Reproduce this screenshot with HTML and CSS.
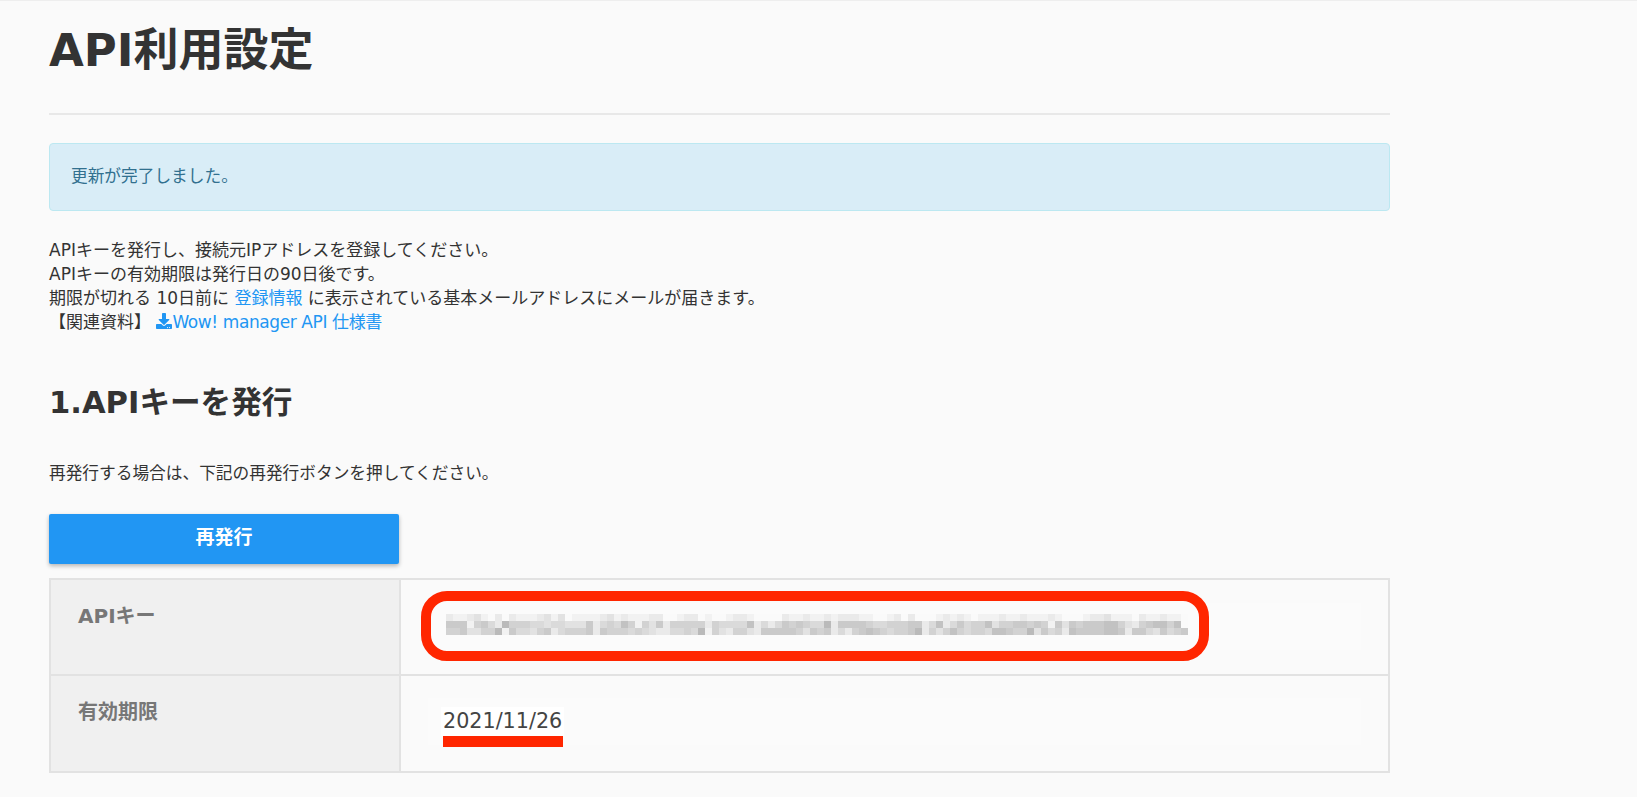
FILE: index.html
```html
<!DOCTYPE html>
<html lang="ja">
<head>
<meta charset="utf-8">
<title>API利用設定</title>
<link rel="stylesheet" href="styles.css">
</head>
<body>
<main class="page">
  <h1 class="title">API利用設定</h1>
  <div class="alert">更新が完了しました。</div>
  <p class="intro">APIキーを発行し、接続元IPアドレスを登録してください。<br>
  APIキーの有効期限は発行日の90日後です。<br>
  期限が切れる 10日前に <a class="link" href="#">登録情報</a> に表示されている基本メールアドレスにメールが届きます。<br>
  【関連資料】 <a class="link link-doc" href="#"><svg class="dl-icon" viewBox="0 0 512 512" aria-hidden="true"><path d="M216 0h80c13.3 0 24 10.7 24 24v168h87.7c17.8 0 26.7 21.5 14.1 34.1L269.7 378.3c-7.5 7.5-19.8 7.5-27.3 0L90.1 226.1c-12.6-12.6-3.7-34.1 14.1-34.1H192V24c0-13.3 10.7-24 24-24zm296 376v112c0 13.3-10.7 24-24 24H24c-13.3 0-24-10.7-24-24V376c0-13.3 10.7-24 24-24h146.7l49 49c20.1 20.1 52.5 20.1 72.6 0l49-49H488c13.3 0 24 10.7 24 24zm-124 88c0-11-9-20-20-20s-20 9-20 20 9 20 20 20 20-9 20-20zm64 0c0-11-9-20-20-20s-20 9-20 20 9 20 20 20 20-9 20-20z"/></svg>Wow! manager API 仕様書</a></p>
  <h2 class="section">1.APIキーを発行</h2>
  <p class="lead">再発行する場合は、下記の再発行ボタンを押してください。</p>
  <button class="reissue" type="button">再発行</button>
  <div class="info">
    <div class="label">APIキー</div>
    <div class="cell">
      <div class="field field-key">
        <svg id="mosaic" class="mosaic" width="742" height="21" viewBox="0 0 742 21" aria-hidden="true"></svg>
        <span class="mark-ring"></span>
      </div>
    </div>
    <div class="label label-last">有効期限</div>
    <div class="cell cell-last">
      <div class="field field-date">
        <span class="date">2021/11/26</span>
        <span class="mark-line"></span>
      </div>
    </div>
  </div>
</main>
<script src="mosaic.js"></script>
</body>
</html>
```

FILE: styles.css
```css
* { box-sizing: border-box; }
html, body { margin: 0; padding: 0; }
body {
  background: #fafafa;
  color: #333;
  border-top: 1px solid #eeeeee;
  font-family: "DejaVu Sans", "Noto Sans CJK JP", sans-serif;
  font-size: 16.7px;
  line-height: 24px;
  height: 797px;
  overflow: hidden;
}
.page { width: 1341px; margin-left: 49px; }
.title {
  margin: 27px 0 0;
  padding-bottom: 40px;
  border-bottom: 2px solid #e8e8e8;
  font-size: 45px;
  line-height: 45px;
  font-weight: 700;
}
.alert {
  margin-top: 28px;
  height: 68px;
  padding: 20px 21px;
  background: #d9edf7;
  border: 1px solid #bce8f1;
  border-radius: 4px;
  color: #31708f;
}
.intro { margin: 27px 0 0; font-size: 17px; }
.link { color: #2196f3; text-decoration: none; }
.link-doc { letter-spacing: -.4px; }
.dl-icon { width: 16px; height: 16px; fill: #2196f3; vertical-align: -1px; }
.section {
  margin: 49px 0 0;
  font-size: 30.6px;
  line-height: 40px;
  font-weight: 700;
}
.lead { margin: 38px 0 0; }
.reissue {
  display: block;
  width: 350px;
  height: 50px;
  margin-top: 29px;
  padding: 0 0 4px;
  border: 0;
  border-radius: 2px;
  background: #2196f3;
  color: #fff;
  font: 700 19px/28px "DejaVu Sans", "Noto Sans CJK JP", sans-serif;
  box-shadow: 0 2px 4px rgba(0, 0, 0, .28);
}
.info {
  display: grid;
  grid-template-columns: 350px 1fr;
  margin-top: 14px;
  border: 2px solid #e2e2e2;
}
.label {
  height: 96px;
  padding: 22px 0 0 27px;
  background: #f0f0f0;
  border-right: 2px solid #e2e2e2;
  border-bottom: 2px solid #e2e2e2;
  color: #777;
  font-size: 20px;
  line-height: 28px;
  font-weight: 700;
}
.cell {
  height: 96px;
  padding: 23px 27px 0;
  border-bottom: 2px solid #e2e2e2;
}
.label-last, .cell-last { height: 95px; border-bottom: 0; }
.cell-last { padding-top: 22px; }
.field {
  position: relative;
  height: 47px;
  background: #fbfbfb;
}
.mosaic {
  display: block;
  position: absolute;
  left: 18px;
  top: 11px;
  filter: blur(.3px);
}
.mark-ring {
  position: absolute;
  left: -7px;
  top: -12px;
  width: 788px;
  height: 70px;
  border: 10px solid #ff2600;
  border-radius: 26px;
}
.date {
  position: absolute;
  left: 13px;
  top: 9px;
  padding: 0 2px;
  background: #fff;
  color: #444;
  font-size: 20.7px;
  line-height: 29px;
}
.mark-line {
  position: absolute;
  left: 15px;
  top: 38px;
  width: 120px;
  height: 11px;
  background: #ff2600;
}
```

FILE: mosaic.js
```js
var rows = [
  "211231020211123130111123121" + "112200122010012210000211211" + "212221100120200012121011121" + "1211121000122311102112110",
  "666156428555443443336245475" + "153625555525444472424656544" + "826666544555662472464557355" + "6656516365666775325677570",
  "556335581644356245556265554" + "543224454815325532666665365" + "624256765455682535754554776" + "5583645276666776266436456"
];
var svg = document.getElementById("mosaic");
var ns = "http://www.w3.org/2000/svg";
rows.forEach(function (row, y) {
  row.split("").forEach(function (level, x) {
    var v = 250 - level * 8;
    var r = document.createElementNS(ns, "rect");
    r.setAttribute("x", x * 7);
    r.setAttribute("y", y * 7);
    r.setAttribute("width", 7);
    r.setAttribute("height", 7);
    r.setAttribute("fill", "rgb(" + v + "," + v + "," + v + ")");
    svg.appendChild(r);
  });
});
```
